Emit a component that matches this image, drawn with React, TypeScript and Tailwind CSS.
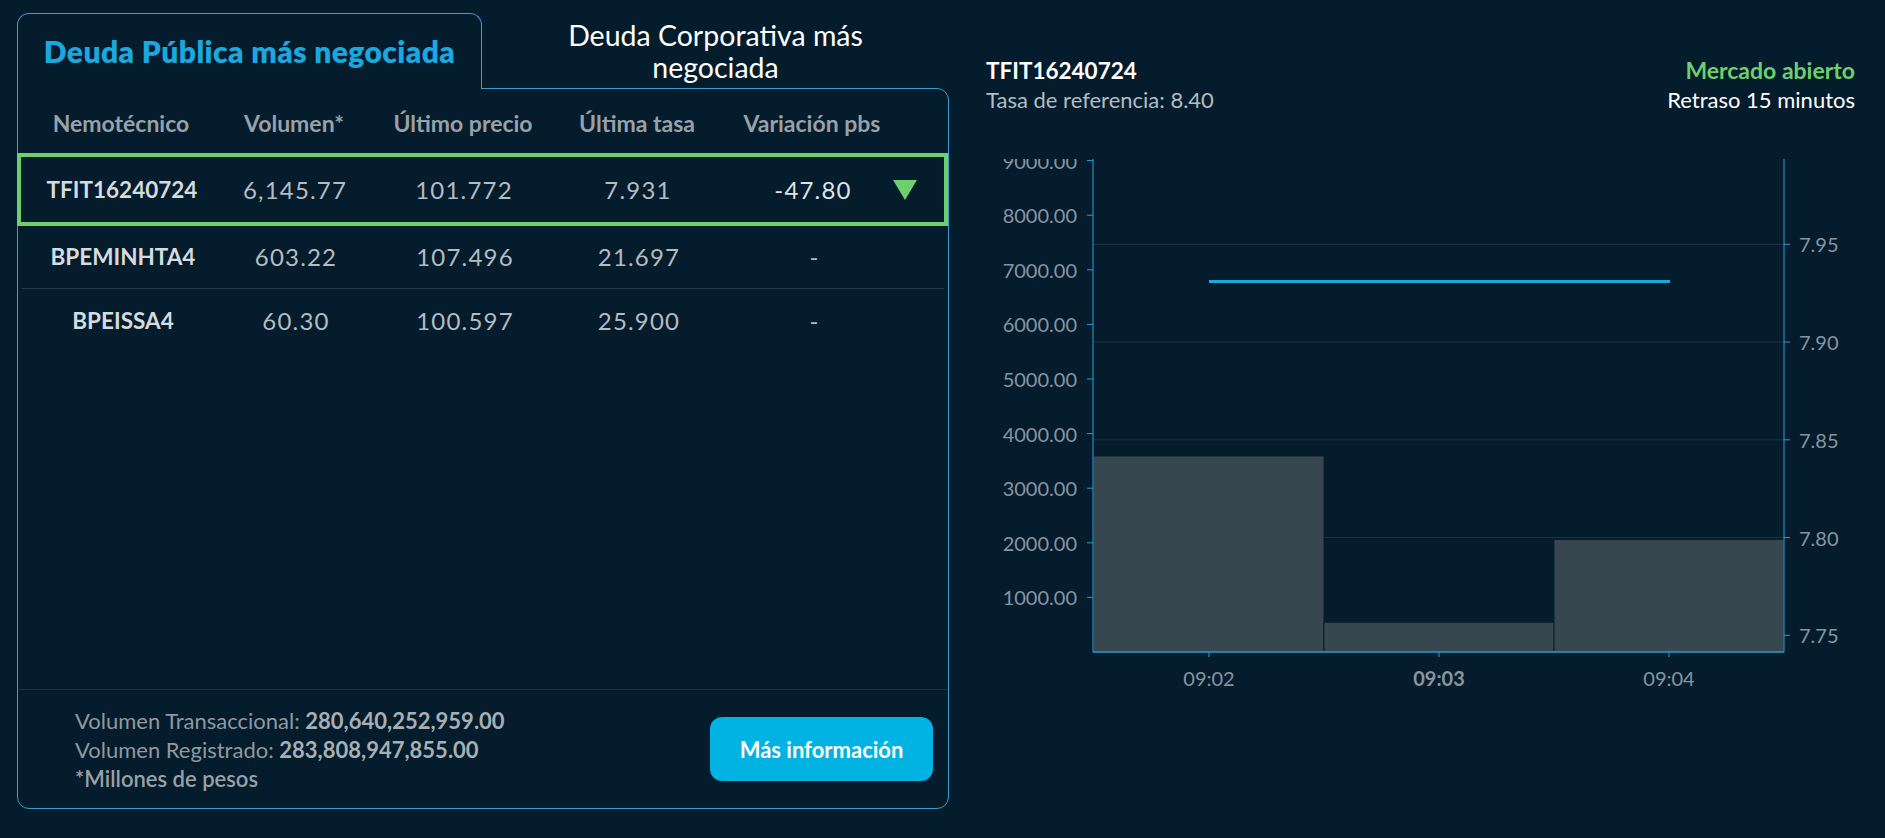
import React from "react";

const rows = [
  { id: "TFIT16240724", vol: "6,145.77", price: "101.772", rate: "7.931", varp: "-47.80", active: true },
  { id: "BPEMINHTA4", vol: "603.22", price: "107.496", rate: "21.697", varp: "-", active: false },
  { id: "BPEISSA4", vol: "60.30", price: "100.597", rate: "25.900", varp: "-", active: false },
];

const gridCols = "grid grid-cols-[206px_140px_198px_150px_176px_1fr]";

function Triangle() {
  return (
    <svg width="24" height="20" viewBox="0 0 24 20">
      <polygon points="0,0 24,0 12,20" fill="#6dcf6d" />
    </svg>
  );
}

function Chart() {
  const L = 107;
  const R = 798;
  const B = 493;
  const yv = (v: number) => B - v * 0.0546;
  const yr = (r: number) => 85.3 + ((7.95 - r) / 0.05) * 97.75;
  const leftTicks = [1000, 2000, 3000, 4000, 5000, 6000, 7000, 8000, 9000];
  const rightTicks = [7.75, 7.8, 7.85, 7.9, 7.95];
  const bars = [
    { x: 107, w: 231, v: 3590 },
    { x: 338, w: 230, v: 545 },
    { x: 568, w: 230, v: 2060 },
  ];
  const xTicks = [
    { x: 223, label: "09:02", bold: false },
    { x: 453, label: "09:03", bold: true },
    { x: 683, label: "09:04", bold: false },
  ];
  return (
    <svg width="869" height="540" viewBox="0 0 869 540" className="block">
      {rightTicks.map((r) => (
        <line key={"g" + r} x1={L} x2={R} y1={yr(r)} y2={yr(r)} stroke="#1b3547" strokeWidth="1" />
      ))}
      {bars.map((b) => (
        <rect key={b.x} x={b.x} y={yv(b.v)} width={b.w} height={B - yv(b.v)} fill="#37474f" stroke="#0a1f2e" strokeWidth="1" />
      ))}
      <line x1={223} x2={684} y1={yr(7.931)} y2={yr(7.931)} stroke="#1ba9dc" strokeWidth="3" />
      <line x1={L} x2={L} y1={0} y2={B} stroke="#2a9fd6" strokeWidth="1" />
      <line x1={R} x2={R} y1={0} y2={B} stroke="#2a9fd6" strokeWidth="1" />
      <line x1={L} x2={R} y1={B} y2={B} stroke="#2a9fd6" strokeWidth="1.5" />
      {leftTicks.map((v) => (
        <g key={"l" + v}>
          <line x1={L - 6} x2={L} y1={yv(v)} y2={yv(v)} stroke="#2a9fd6" strokeWidth="1" />
          <text x={L - 16} y={yv(v)} textAnchor="end" dominantBaseline="central" fill="#8795a0" fontSize="20" fontFamily="Lato, sans-serif">
            {v.toFixed(2)}
          </text>
        </g>
      ))}
      {rightTicks.map((r) => (
        <g key={"r" + r}>
          <line x1={R} x2={R + 6} y1={yr(r)} y2={yr(r)} stroke="#2a9fd6" strokeWidth="1" />
          <text x={R + 15} y={yr(r)} textAnchor="start" dominantBaseline="central" fill="#8795a0" fontSize="20" fontFamily="Lato, sans-serif">
            {r.toFixed(2)}
          </text>
        </g>
      ))}
      {xTicks.map((t) => (
        <g key={t.label}>
          <line x1={t.x} x2={t.x} y1={B} y2={B + 5} stroke="#2a9fd6" strokeWidth="1" />
          <text x={t.x} y={519} textAnchor="middle" dominantBaseline="central" fill="#8795a0" fontSize="20" fontWeight={t.bold ? 700 : 400} fontFamily="Lato, sans-serif">
            {t.label}
          </text>
        </g>
      ))}
    </svg>
  );
}

export default function App() {
  return (
    <div className="w-[1885px] h-[838px] bg-[#051c2c] font-[family-name:Lato,sans-serif] flex pt-[13px] pl-[17px] overflow-hidden">
      {/* Left column */}
      <div className="w-[932px] flex flex-col">
        <div className="flex h-[75px]">
          <div className="relative z-10 w-[465px] -mb-px border border-b-0 border-[#3a9ccc] rounded-t-[12px] bg-[#051c2c] flex items-center justify-center">
            <span className="text-[#1aa8df] text-[30px] font-extrabold tracking-[0.4px]">Deuda Pública más negociada</span>
          </div>
          <div className="flex-1 flex items-center justify-center text-center text-white text-[28.5px] leading-[32px]">
            Deuda Corporativa más
            <br />
            negociada
          </div>
        </div>
        <div className="h-[721px] border border-[#3a9ccc] rounded-tr-[12px] rounded-b-[12px] flex flex-col">
          <div className={`${gridCols} h-[64px] items-center pt-[4px] text-[#98a1a8] text-[23px] font-bold`}>
            <div className="text-center">Nemotécnico</div>
            <div className="text-center">Volumen*</div>
            <div className="text-center">Último precio</div>
            <div className="text-center">Última tasa</div>
            <div className="col-span-2 text-center pr-[36px]">Variación pbs</div>
          </div>
          {rows.map((r, i) =>
            r.active ? (
              <div key={r.id} className={`${gridCols} -ml-px w-[931px] h-[73px] items-center border-[4px] border-[#6dcf6d]`}>
                <div className="text-center text-[#d6dbde] text-[22.5px] font-bold -ml-[4px]">{r.id}</div>
                <div className="text-center text-[#b4bcc2] text-[24px] tracking-[1.2px] -ml-[4px]">{r.vol}</div>
                <div className="text-center text-[#b4bcc2] text-[24px] tracking-[1.2px] -ml-[4px]">{r.price}</div>
                <div className="text-center text-[#b4bcc2] text-[24px] tracking-[1.2px] -ml-[4px]">{r.rate}</div>
                <div className="text-center text-[#dfe3e6] text-[24px] tracking-[1.2px] pl-[20px]">{r.varp}</div>
                <div className="flex items-center pl-[2px]">
                  <Triangle />
                </div>
              </div>
            ) : (
              <div key={r.id} className={`${gridCols} h-[63px] items-center mx-[4px] ${i === 1 ? "border-b border-[#26394a]" : ""}`}>
                <div className="text-center text-[#d6dbde] text-[22.5px] font-bold -ml-[4px]">{r.id}</div>
                <div className="text-center text-[#b4bcc2] text-[24px] tracking-[1.2px] -ml-[4px]">{r.vol}</div>
                <div className="text-center text-[#b4bcc2] text-[24px] tracking-[1.2px] -ml-[4px]">{r.price}</div>
                <div className="text-center text-[#b4bcc2] text-[24px] tracking-[1.2px] -ml-[4px]">{r.rate}</div>
                <div className="text-center text-[#b4bcc2] text-[24px] pl-[20px]">{r.varp}</div>
                <div />
              </div>
            )
          )}
          <div className="flex-1" />
          <div className="h-[119px] border-t border-[#1c2f3d] flex items-center justify-between pl-[57px] pr-[15px]">
            <div className="text-[22px] leading-[29px] text-[#8f99a1]">
              <div>
                Volumen Transaccional: <span className="font-bold text-[#a7afb5]">280,640,252,959.00</span>
              </div>
              <div>
                Volumen Registrado: <span className="font-bold text-[#a7afb5]">283,808,947,855.00</span>
              </div>
              <div className="font-semibold text-[#98a1a7]">*Millones de pesos</div>
            </div>
            <button className="w-[223px] h-[64px] rounded-[12px] bg-[#00b3e3] text-white text-[22px] font-bold">
              Más información
            </button>
          </div>
        </div>
      </div>

      {/* Right column */}
      <div className="ml-[37px] w-[869px] flex flex-col">
        <div className="mt-[43px] flex justify-between text-[22px] leading-[29px]">
          <div>
            <div className="font-bold text-white text-[22.5px]">TFIT16240724</div>
            <div className="text-[#b3bcc2]">Tasa de referencia: 8.40</div>
          </div>
          <div className="text-right">
            <div className="font-bold text-[#6dcf6d] text-[23px]">Mercado abierto</div>
            <div className="text-white">Retraso 15 minutos</div>
          </div>
        </div>
        <div className="mt-[45px]">
          <Chart />
        </div>
      </div>
    </div>
  );
}
